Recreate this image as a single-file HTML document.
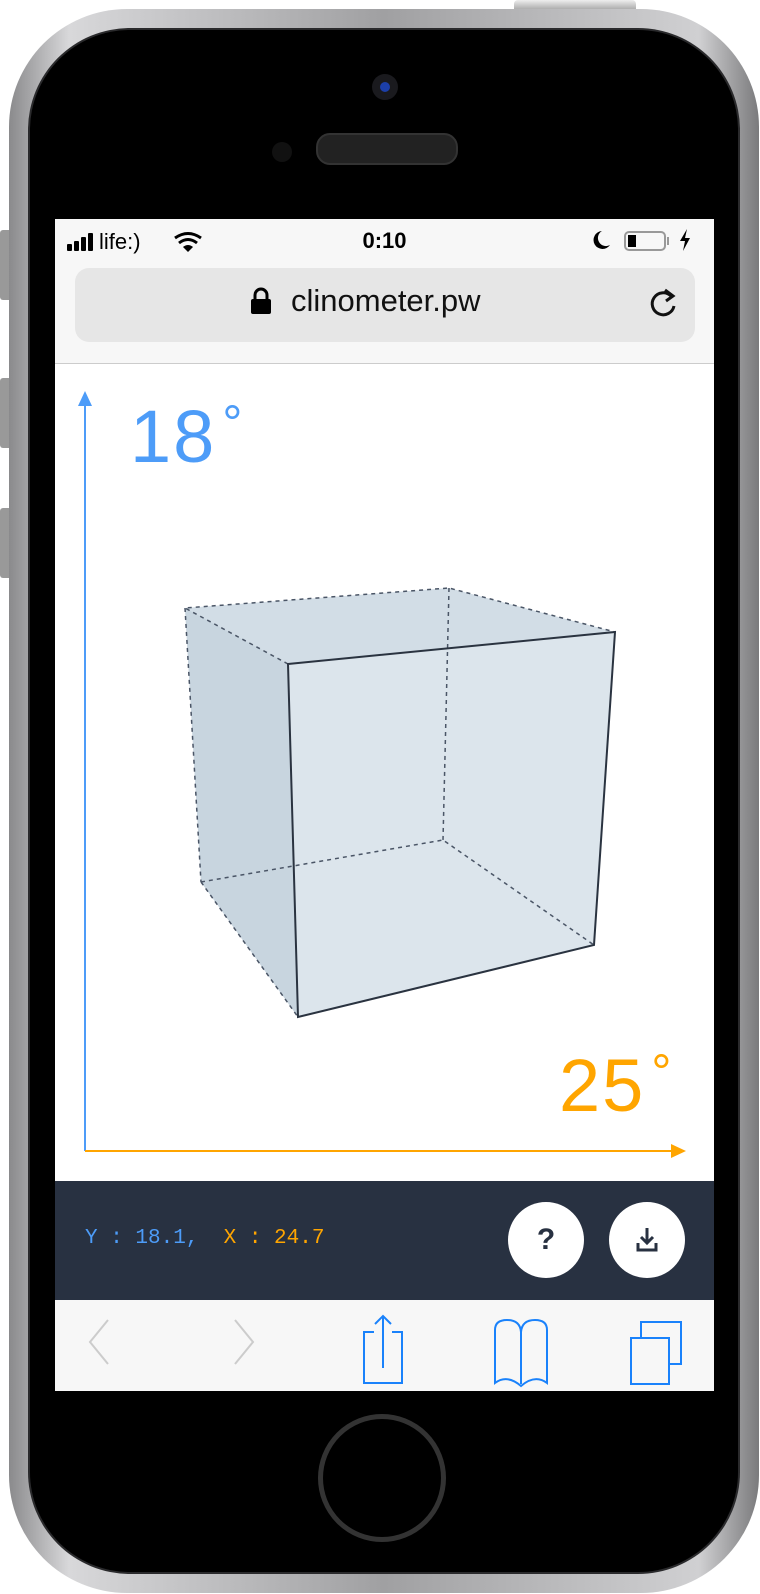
<!DOCTYPE html>
<html><head><meta charset="utf-8"><style>
body{margin:0;width:760px;height:1594px;background:#fff;position:relative;overflow:hidden;font-family:"Liberation Sans",sans-serif}
.phone{position:absolute;left:9px;top:9px;width:750px;height:1584px;border-radius:118px;background:linear-gradient(90deg,#8a8a8c,#d8d8da 8%,#a0a0a2 50%,#d0d0d2 92%,#7a7a7c)}
.inner{position:absolute;left:21px;top:21px;width:708px;height:1542px;border-radius:100px;background:#000;box-shadow:0 0 0 2px #2a2a2c}
.abs{position:absolute}
.deg{font-weight:300;letter-spacing:2px}
.deg sup{font-size:50px;vertical-align:0;position:relative;top:-22px;margin-left:6px}
</style></head><body>
<div class="abs" style="left:514px;top:0;width:122px;height:12px;background:linear-gradient(#eee,#999);border-radius:4px 4px 0 0"></div>
<div class="abs" style="left:0;top:230px;width:12px;height:70px;background:#999;border-radius:3px"></div>
<div class="abs" style="left:0;top:378px;width:12px;height:70px;background:#999;border-radius:3px"></div>
<div class="abs" style="left:0;top:508px;width:12px;height:70px;background:#999;border-radius:3px"></div>
<div class="phone"><div class="inner"></div></div>
<div class="abs" style="left:372px;top:74px;width:26px;height:26px;border-radius:50%;background:#1a1a1e"><div style="margin:8px;width:10px;height:10px;border-radius:50%;background:#1c3fa8"></div></div>
<div class="abs" style="left:272px;top:142px;width:20px;height:20px;border-radius:50%;background:#111"></div>
<div class="abs" style="left:316px;top:133px;width:138px;height:28px;border-radius:14px;background:#222;border:2px solid #333"></div>
<!-- screen -->
<div class="abs" style="left:55px;top:219px;width:659px;height:1172px;background:#fff;overflow:hidden">
  <div class="abs" style="left:0;top:0;width:659px;height:144px;background:#f7f7f7;border-bottom:1px solid #ccc"></div>
  <svg class="abs" style="left:12px;top:11px" width="140" height="26">
    <rect x="0" y="14" width="5" height="7" rx="1"/><rect x="7" y="11" width="5" height="10" rx="1"/><rect x="14" y="7" width="5" height="14" rx="1"/><rect x="21" y="3" width="5" height="18" rx="1"/>
    <path d="M108 8 Q121 -1 134 8" fill="none" stroke="#000" stroke-width="3"/><path d="M112 13 Q121 6 130 13" fill="none" stroke="#000" stroke-width="3"/><path d="M116 17 L121 22 L126 17 Q121 13 116 17Z"/>
  </svg>
  <div class="abs" style="left:44px;top:10px;font-size:22px;color:#000">life:)</div>
  <div class="abs" style="left:0;width:659px;top:9px;text-align:center;font-size:22px;font-weight:bold">0:10</div>
  <svg class="abs" style="left:535px;top:9px" width="22" height="24"><path d="M12 3 A9 9 0 1 0 20 17 A8 8 0 0 1 12 3Z"/></svg>
  <div class="abs" style="left:569px;top:12px;width:42px;height:20px;border:2px solid #999;border-radius:5px;box-sizing:border-box"><div style="margin:2px;width:8px;height:12px;background:#000"></div></div>
  <div class="abs" style="left:612px;top:18px;width:2px;height:8px;background:#999"></div>
  <svg class="abs" style="left:624px;top:10px" width="12" height="22"><path d="M8 0 L1 12 H6 L4 22 L11 9 H6 Z"/></svg>
  <div class="abs" style="left:20px;top:49px;width:620px;height:74px;background:#e6e6e6;border-radius:14px"></div>
  <svg class="abs" style="left:195px;top:68px" width="22" height="28"><path d="M5 12 V8 A6 6 0 0 1 17 8 V12" fill="none" stroke="#000" stroke-width="3"/><rect x="1" y="12" width="20" height="15" rx="2"/></svg>
  <div class="abs" style="left:236px;top:64px;font-size:31px;color:#111">clinometer.pw</div>
  <svg class="abs" style="left:590px;top:67px" width="36" height="36" viewBox="0 0 36 36"><path d="M26 10 A11 11 0 1 0 29 20" fill="none" stroke="#111" stroke-width="3"/><path d="M20 4 L28 10 L21 15" fill="none" stroke="#111" stroke-width="3"/></svg>
  <svg class="abs" style="left:0;top:0" width="659" height="962">
    <g transform="translate(-55,-219)">
    <polygon points="185,608 449,588 615,632 594,945 298,1017 201,882" fill="#d2dde6"/>
    <polygon points="185,608 288,664 298,1017 201,882" fill="#c8d5df"/>
    <polygon points="288,664 615,632 594,945 298,1017" fill="#dde6ec" opacity=".9"/>
    <g fill="none" stroke="#4a5566" stroke-width="1.5" stroke-dasharray="4 4">
      <polyline points="288,664 185,608 449,588 615,632"/><line x1="185" y1="608" x2="201" y2="882"/>
      <line x1="449" y1="588" x2="443" y2="840"/><polyline points="201,882 443,840 594,945"/><line x1="201" y1="882" x2="298" y2="1017"/>
    </g>
    <g fill="none" stroke="#2a3340" stroke-width="2">
      <polygon points="288,664 615,632 594,945 298,1017"/>
    </g>
    <line x1="85" y1="402" x2="85" y2="1151" stroke="#4d9cf8" stroke-width="2"/>
    <polygon points="85,391 78,406 92,406" fill="#4d9cf8"/>
    <line x1="85" y1="1151" x2="672" y2="1151" stroke="#ffa500" stroke-width="2"/>
    <polygon points="686,1151 671,1144 671,1158" fill="#ffa500"/>
    </g>
  </svg>
  <div class="abs deg" style="left:75px;top:175px;font-size:74px;color:#4d9cf8">18<sup>°</sup></div>
  <div class="abs deg" style="left:504px;top:824px;font-size:74px;color:#ffa500">25<sup>°</sup></div>
  <div class="abs" style="left:0;top:962px;width:659px;height:119px;background:#283141"></div>
  <div class="abs" style="left:30px;top:1008px;font-family:'Liberation Mono',monospace;font-size:21px;color:#4d9cf8;white-space:pre">Y : 18.1,  <span style="color:#ffa500">X : 24.7</span></div>
  <div class="abs" style="left:453px;top:983px;width:76px;height:76px;border-radius:50%;background:#fff;text-align:center;line-height:76px;font-size:30px;font-weight:bold;color:#283141">?</div>
  <div class="abs" style="left:554px;top:983px;width:76px;height:76px;border-radius:50%;background:#fff"></div>
  <svg class="abs" style="left:578px;top:1006px" width="28" height="30"><path d="M14 3 V18 M8 12 L14 18 L20 12 M5 18 V25 H23 V18" fill="none" stroke="#283141" stroke-width="3"/></svg>
  <div class="abs" style="left:0;top:1081px;width:659px;height:91px;background:#f7f7f7"></div>
  <svg class="abs" style="left:0;top:1081px" width="659" height="91">
    <polyline points="53,40 35,62 53,84" transform="translate(0,-20)" fill="none" stroke="#ccc" stroke-width="2"/>
    <polyline points="180,40 198,62 180,84" transform="translate(0,-20)" fill="none" stroke="#ccc" stroke-width="2"/>
    <g fill="none" stroke="#1a82fb" stroke-width="2">
    <path d="M319 32 H309 V83 H347 V32 H337 M328 68 V16 M320 24 L328 16 L336 24"/>
    <path d="M440 83 V30 Q440 20 452 20 Q465 20 466 32 Q467 20 480 20 Q492 20 492 30 V83 Q480 74 466 86 Q452 74 440 83 Z M466 32 V84"/>
    <rect x="576" y="38" width="38" height="46"/><path d="M586 38 V22 H626 V64 H614"/>
    </g>
  </svg>
</div>
<div class="abs" style="left:318px;top:1414px;width:128px;height:128px;border-radius:50%;border:5px solid #333;box-sizing:border-box"></div>
</body></html>
